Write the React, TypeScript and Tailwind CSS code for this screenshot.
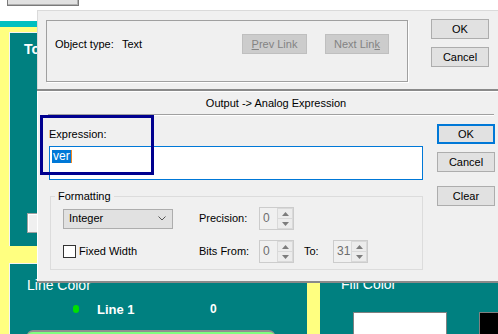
import React from 'react';

const Spinner: React.FC<{ value: string }> = ({ value }) => (
    <div className="flex h-[23px] w-[35px] border border-[#cccccc] bg-[#f0f0f0]">
        <div className="w-[17px] pl-[3px] pt-[4px] text-[12px] leading-[13px] text-[#6d6d6d]">{value}</div>
        <div className="flex flex-1 flex-col">
            <div className="flex flex-1 items-center justify-center border border-[#d9d9d9] bg-[#ececec]">
                <svg width="7" height="4" viewBox="0 0 7 4"><polygon points="0,4 3.5,0 7,4" fill="#7c7c7c" /></svg>
            </div>
            <div className="flex flex-1 items-center justify-center border border-t-0 border-[#d9d9d9] bg-[#ececec]">
                <svg width="7" height="4" viewBox="0 0 7 4"><polygon points="0,0 3.5,4 7,0" fill="#7c7c7c" /></svg>
            </div>
        </div>
    </div>
);

const Button: React.FC<{ label: React.ReactNode; focused?: boolean }> = ({ label, focused }) => (
    <div
        className={
            focused
                ? 'flex h-[20px] w-[58px] items-center justify-center border-2 border-[#0078d7] bg-[#e1e1e1] text-black'
                : 'flex h-[20px] w-[58px] items-center justify-center border border-[#adadad] bg-[#e1e1e1] text-black'
        }
    >
        {label}
    </div>
);

const App: React.FC = () => {
    return (
        <div className="relative h-[334px] w-[498px] overflow-hidden bg-white font-['Liberation_Sans',Arial,sans-serif] text-[11px] leading-[13px]">
            {/* application behind the dialog */}
            <div className="flex h-full flex-col">
                <div className="h-[21px] shrink-0 pl-[7px]">
                    <div className="h-[6px] w-[72px] border border-t-0 border-[#7a7a7a] bg-[#e1e1e1] shadow-[inset_-1px_-1px_0_#b0b0b0]" />
                </div>
                <div className="h-[6px] shrink-0 bg-[#00c0c0]" />
                <div className="flex min-h-0 flex-1 flex-col bg-[#ffff80] pl-[9px] pt-[5px]">
                    <div className="flex h-[214px] shrink-0 flex-col border-l border-t border-[#f4f4f4] bg-[#008080]">
                        <div className="pl-[14px] pt-[8px] text-[14px] font-bold leading-[16px] text-white">To</div>
                        <div className="mb-[13px] ml-[17px] mt-auto h-[20px] w-[60px] border border-[#a0a0a0] bg-[#f0f0f0] shadow-[inset_1px_1px_0_#fff]" />
                    </div>
                    <div className="mt-[17px] flex min-h-0 flex-1">
                        <div className="w-[298px] shrink-0 border-l border-t border-[#f4f4f4] bg-[#008080] pl-[17px] pt-[13px] text-white">
                            <div className="text-[14px] leading-[16px]">Line Color</div>
                            <div className="mt-[8px] flex h-[16px] items-center">
                                <div className="ml-[46px] h-[8px] w-[6px] rounded-full bg-[#00e000]" />
                                <span className="ml-[18px] w-[113px] text-[13px] font-bold">Line 1</span>
                                <span className="text-[12px] font-bold">0</span>
                            </div>
                            <div className="mt-[13px] h-[12px] w-[248px] rounded-t-[6px] border-t-2 border-[#909090] bg-[#80ff80]" />
                        </div>
                        <div className="ml-[13px] min-w-0 flex-1 overflow-hidden bg-[#008080] pl-[21px] pt-[13px] text-white">
                            <div className="text-[14px] leading-[16px]">Fill Color</div>
                            <div className="mt-[20px] flex">
                                <div className="ml-[12px] h-[30px] w-[94px] shrink-0 border border-[#808080] bg-white" />
                                <div className="ml-[32px] h-[30px] w-[30px] shrink-0 border border-[#808080] bg-black" />
                            </div>
                        </div>
                    </div>
                </div>
            </div>

            {/* properties dialog window */}
            <div className="absolute left-[37px] top-[10px] flex w-[477px] flex-col">
                <div className="flex h-[79px] border-l border-t border-[#dadada] bg-[#f0f0f0] pl-[8px] pt-[8px]">
                    <div className="mt-[1px] flex h-[62px] w-[362px] items-start border border-[#a0a0a0] pl-[8px] pt-[13px] shadow-[1px_1px_0_#fff]">
                        <div className="flex h-[20px] items-center">
                            <span className="w-[67px]">Object type:</span>
                            <span className="w-[120px]">Text</span>
                            <div className="flex h-[20px] w-[65px] items-center justify-center border border-[#bfbfbf] bg-[#cccccc] text-[#838383]">
                                <span><u>P</u>rev Link</span>
                            </div>
                            <div className="ml-[18px] flex h-[20px] w-[64px] items-center justify-center border border-[#bfbfbf] bg-[#cccccc] text-[#838383]">
                                <span>Next Lin<u>k</u></span>
                            </div>
                        </div>
                    </div>
                    <div className="ml-[23px] flex flex-col gap-[8px]">
                        <Button label="OK" />
                        <Button label="Cancel" />
                    </div>
                </div>
                <div className="h-[2px] bg-[#8a8a8a]" />

                <div className="flex h-[190px] flex-col border-l border-t border-white bg-[#f0f0f0]">
                    <div className="flex h-[22px] items-center justify-center">Output -&gt; Analog Expression</div>
                    <div className="ml-[10px] mr-[20px] h-[2px] border-t border-b border-t-[#a0a0a0] border-b-white" />
                    <div className="flex pl-[11px]">
                        <div className="flex w-[374px] flex-col pt-[11px]">
                            <div className="h-[14px] leading-[14px]">Expression:</div>
                            <div className="mt-[5px] flex h-[34px] items-start border border-[#0078d7] bg-white pl-[2px] pt-[3px]">
                                <span className="bg-[#0078d7] px-[1px] text-[12px] leading-[13px] text-white">ver</span>
                                <span className="h-[13px] w-[1px] bg-[#f08a24]" />
                            </div>
                            <fieldset className="ml-[1px] mt-[10px] w-[373px] border border-[#dcdcdc] pb-[6px] pl-[4px]">
                                <legend className="px-[3px] leading-[13px]">Formatting</legend>
                                <div className="mt-[4px] flex h-[23px] items-center">
                                    <div className="ml-[8px] flex h-[20px] w-[110px] items-center border border-[#adadad] bg-[#e1e1e1] pl-[5px] pr-[6px]">
                                        <span className="flex-1">Integer</span>
                                        <svg width="8" height="5" viewBox="0 0 8 5">
                                            <polyline points="0.5,0.5 4,4 7.5,0.5" fill="none" stroke="#555" strokeWidth="1" />
                                        </svg>
                                    </div>
                                    <span className="ml-[26px] w-[60px]">Precision:</span>
                                    <Spinner value="0" />
                                </div>
                                <div className="mt-[10px] flex h-[23px] items-center">
                                    <div className="ml-[8px] h-[13px] w-[13px] border border-[#333333] bg-white" />
                                    <span className="ml-[3px] w-[120px]">Fixed Width</span>
                                    <span className="w-[60px]">Bits From:</span>
                                    <Spinner value="0" />
                                    <span className="ml-[10px] w-[29px]">To:</span>
                                    <Spinner value="31" />
                                </div>
                            </fieldset>
                        </div>
                        <div className="ml-[14px] flex flex-col pt-[8px]">
                            <Button label="OK" focused />
                            <div className="mt-[8px]"><Button label="Cancel" /></div>
                            <div className="mt-[14px]"><Button label="Clear" /></div>
                        </div>
                    </div>
                </div>
                <div className="h-[2px] bg-[#8a8a8a]" />
            </div>

            {/* highlight frame drawn over the dialog */}
            <div className="absolute left-[40px] top-[115px] h-[60px] w-[114px] border-[3px] border-[#00008f]" />
        </div>
    );
};

export default App;
